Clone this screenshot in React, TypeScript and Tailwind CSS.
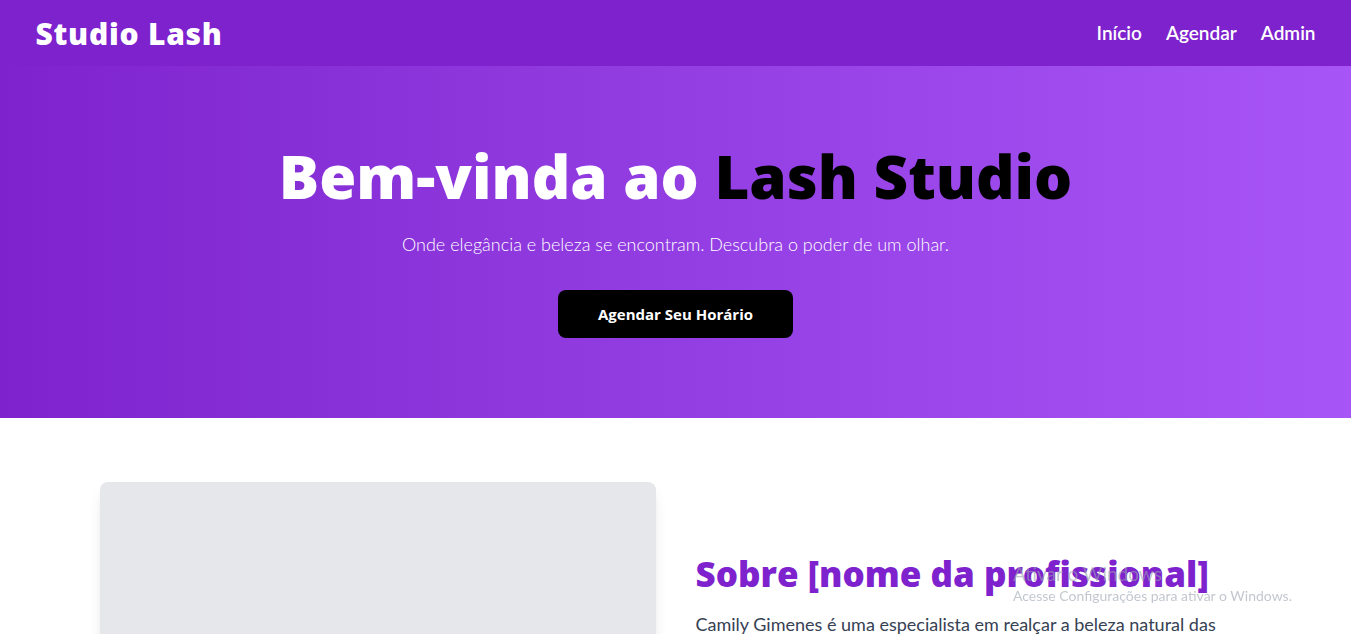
const font = { fontFamily: "Lato, 'Noto Sans', sans-serif" };
const heavy = { fontFamily: "'Open Sans', 'Noto Sans', sans-serif" };

const NavBar: React.FC = () => (
  <nav className="bg-[#7e22ce] text-white">
    <div className="container mx-auto flex h-[66px] items-center justify-between">
      <h1 style={heavy} className="text-[30px] font-extrabold tracking-wide">
        Studio Lash
      </h1>
      <ul className="flex gap-6 text-[19px] font-semibold">
        <li>Início</li>
        <li>Agendar</li>
        <li>Admin</li>
      </ul>
    </div>
  </nav>
);

const Hero: React.FC = () => (
  <section className="bg-gradient-to-r from-[#7e22ce] to-[#a855f7] py-20 text-center text-white">
    <h2 style={heavy} className="text-6xl font-extrabold leading-none">
      Bem-vinda ao <span className="text-black">Lash Studio</span>
    </h2>
    <p className="mt-6 text-lg font-light">
      Onde elegância e beleza se encontram. Descubra o poder de um olhar.
    </p>
    <button
      style={heavy}
      className="mt-8 h-12 rounded-lg bg-black px-10 text-[15px] font-bold text-white"
    >
      Agendar Seu Horário
    </button>
  </section>
);

const About: React.FC = () => (
  <section className="bg-white py-16">
    <div className="container mx-auto grid grid-cols-2 items-center gap-10 px-16">
      <div className="h-96 rounded-lg bg-gray-200 shadow-lg" />
      <div>
        <h3
          style={heavy}
          className="mb-4 text-[35px] leading-10 font-extrabold text-[#7e22ce]"
        >
          Sobre [nome da profissional]
        </h3>
        <p className="text-lg leading-7 text-gray-700">
          Camily Gimenes é uma especialista em realçar a beleza natural das
          suas clientes, com técnicas modernas de extensão de cílios e um
          atendimento pensado em cada detalhe, para que cada cliente saia
          confiante e radiante.
        </p>
        <p className="mt-4 text-lg leading-7 text-gray-700">
          Com anos de experiência e paixão pelo que faz, cada procedimento é
          realizado com produtos de alta qualidade e muito carinho.
        </p>
      </div>
    </div>
  </section>
);

export default function App() {
  return (
    <div style={font} className="min-h-screen bg-white">
      <NavBar />
      <Hero />
      <About />
      <div className="pointer-events-none fixed left-[1013px] top-[562px] text-gray-400/60">
        <p className="text-[19px] leading-6">Ativar o Windows</p>
        <p className="text-sm">Acesse Configurações para ativar o Windows.</p>
      </div>
    </div>
  );
}
